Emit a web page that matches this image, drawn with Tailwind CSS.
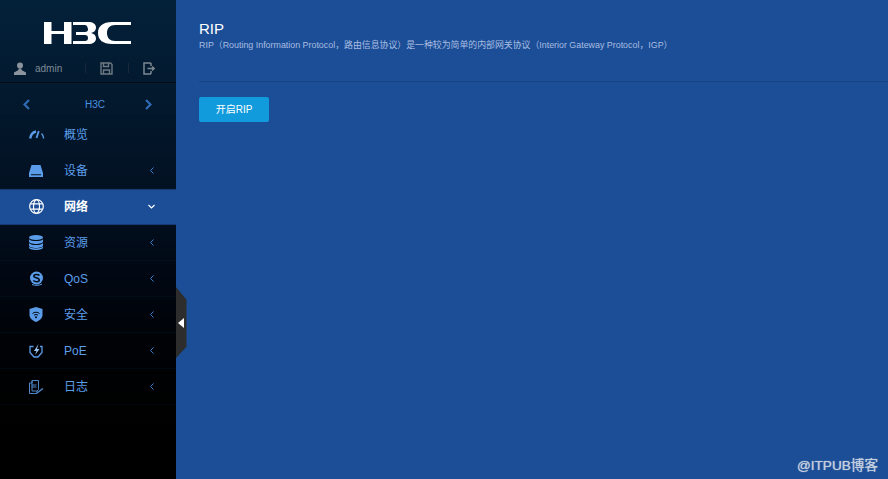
<!DOCTYPE html>
<html lang="zh-CN">
<head>
    <meta charset="UTF-8">
    <meta name="viewport" content="width=device-width, initial-scale=1.0">
    <script src="https://cdn.jsdelivr.net/npm/@tailwindcss/browser@4"></script>
    <title>RIP</title>
</head>
<body class="h-[479px] w-[888px] overflow-hidden bg-[#1b4e96] font-['Liberation_Sans','Noto_Sans_CJK_SC',sans-serif]">
<div class="relative flex h-[479px] w-[888px]">
    <!-- sidebar -->
    <aside class="flex h-full w-[176px] shrink-0 flex-col bg-gradient-to-b from-[#03213a] via-[#020f1f] via-45% to-black">
        <div class="flex h-[83px] flex-col border-b border-[#020c18]">
            <div class="flex justify-center pt-[22px]">
                <svg width="90" height="23" viewBox="0 0 90 23">
                    <path d="M1 0h7.500v9h12.500V0h7.500v22H21V12H8.500v10H1z" fill="#fff"/>
                    <path d="M30 0h15c5 0 8 2 8 5.500c0 3-2 5-5 5.500c3 .5 5 2.500 5 5.500c0 3.500-3 5.500-8 5.500H30v-3h12c2 0 3-1 3-3c0-2-1-3-3-3H33v-3h9c2 0 3-1 3-2.500S44 3 42 3H30z" fill="#fff"/>
                    <path d="M88 0H69C60 0 55 4 55 11s5 11 14 11h19v-3H72c-5 0-8-3-8-8s3-8 8-8h16z" fill="#fff"/>
                </svg>
            </div>
            <div class="mt-[13px] flex h-[20px] items-center text-[10px] text-[#7e8a96]">
                <svg width="12" height="13" viewBox="0 0 12 13" class="ml-[14px]" fill="#8b949c"><circle cx="6" cy="3.500" r="3"/><path d="M4.500 6.500h3v1.500L12 10.500V13H0v-2.500L4.500 8z"/></svg>
                <span class="ml-[9px] w-[50px]">admin</span>
                <span class="h-[10px] w-px bg-[#17293a]"></span>
                <svg width="13" height="13" viewBox="0 0 13 13" class="ml-[14px]" fill="none" stroke="#6f7982" stroke-width="1.400"><path d="M1 1h9.500L12 2.500V12H1z"/><path d="M3.500 1v3.500h5V1M3.500 12V8h6v4"/></svg>
                <span class="ml-[15px] h-[10px] w-px bg-[#17293a]"></span>
                <svg width="12" height="13" viewBox="0 0 12 13" class="ml-[14px]" fill="none" stroke="#7d8790" stroke-width="1.500"><path d="M8 1H1v11h7M8 4V1M8 12V9"/><path d="M4.500 6.500H11M9 4.500l2.200 2-2.200 2"/></svg>
            </div>
        </div>
        <div class="flex h-[34px] items-center border-b border-[#031424] pl-[23px] pt-[10px] text-[10px]">
            <svg width="7" height="11" viewBox="0 0 7 11" fill="none" stroke="#2f6cb5" stroke-width="2.200"><path d="M6 1L1.500 5.500 6 10"/></svg>
            <span class="ml-[55px] w-[60px] text-[#4a90e0]">H3C</span>
            <svg width="7" height="11" viewBox="0 0 7 11" fill="none" stroke="#2f6cb5" stroke-width="2.200"><path d="M1 1l4.500 4.500L1 10"/></svg>
        </div>
        <nav class="flex flex-col text-[12px] text-[#5b9eea]">
            <a class="flex h-[36px] items-center border-b border-[#031628] pl-[29px] pr-[22px]">
                <span class="flex w-[35px]"><svg width="16" height="9" viewBox="0 0 16 9" fill="none" stroke="#5b9ce8"><path d="M1.200 8.500C1.700 4.500 4 2.300 7 1.500" stroke-width="2.400"/><path d="M9.800 1L7.500 8" stroke-width="1.800"/><path d="M12.500 3.500c1.300 1 1.900 3 2.200 5" stroke-width="1.400"/></svg></span>
                <span>概览</span>
            </a>
            <a class="flex h-[36px] items-center border-b border-[#02142a] pl-[29px] pr-[22px]">
                <span class="flex w-[35px]"><svg width="14" height="12" viewBox="0 0 14 12" fill="#5b9ce8"><path d="M2.500 0h9L14 8H0z"/><path d="M0 8h14v4H0zM2 9.300v1h10v-1z" fill-rule="evenodd"/></svg></span>
                <span>设备</span>
                <svg width="4" height="7" viewBox="0 0 4 7" class="ml-auto" fill="none" stroke="#2f7fd0" stroke-width="1"><path d="M3.500.500L.5 3.500l3 3"/></svg>
            </a>
            <a class="flex h-[36px] items-center bg-[#1b4e96] pb-[1px] pl-[29px] pr-[22px] font-bold text-white shadow-[inset_0_1px_0_#143a70,inset_0_-1px_0_#143a70]">
                <span class="flex w-[35px]"><svg width="15" height="15" viewBox="0 0 15 15" fill="none" stroke="#fff" stroke-width="1.200"><circle cx="7.500" cy="7.500" r="6.800"/><ellipse cx="7.500" cy="7.500" rx="3" ry="6.800"/><path d="M1.500 4.800h12M1.500 10.200h12"/></svg></span>
                <span>网络</span>
                <svg width="7" height="5" viewBox="0 0 7 5" class="ml-auto -mr-[1px]" fill="none" stroke="#fff" stroke-width="1.200"><path d="M.5 1l3 3 3-3"/></svg>
            </a>
            <a class="flex h-[36px] items-center border-b border-[#020e1c] pl-[29px] pr-[22px]">
                <span class="flex w-[35px]"><svg width="14" height="15" viewBox="0 0 14 15" fill="#5b9ce8"><ellipse cx="7" cy="2.500" rx="7" ry="2.500"/><path d="M0 4.200C1.500 5.700 4 6 7 6s5.500-.3 7-1.800v2.300C14 8 11 9 7 9S0 8 0 6.500zM0 8.200C1.500 9.500 4 10 7 10s5.500-.5 7-1.800v2.300C14 12 11 13 7 13s-7-1-7-2.500z"/><path d="M0 11.800C1.500 13 4 13.500 7 13.500s5.500-.5 7-1.700v.7C14 14 11 15 7 15s-7-1-7-2.500z"/></svg></span>
                <span>资源</span>
                <svg width="4" height="7" viewBox="0 0 4 7" class="ml-auto" fill="none" stroke="#2f7fd0" stroke-width="1"><path d="M3.500.500L.5 3.500l3 3"/></svg>
            </a>
            <a class="flex h-[36px] items-center border-b border-[#020c18] pl-[29px] pr-[22px]">
                <span class="flex w-[35px]"><svg width="15" height="15" viewBox="0 0 15 15"><circle cx="7.500" cy="7" r="6.500" fill="#5b9ce8"/><path d="M10.500 4.500C9 3 5 3 4.700 5c-.2 2 5.600 1.500 5.600 4 0 2-4 2.300-6 .5" fill="none" stroke="#020a16" stroke-width="1.500"/><path d="M3 13.500c3 1.200 7 1.200 10-.5" fill="none" stroke="#5b9ce8" stroke-width="1"/></svg></span>
                <span>QoS</span>
                <svg width="4" height="7" viewBox="0 0 4 7" class="ml-auto" fill="none" stroke="#2f7fd0" stroke-width="1"><path d="M3.500.500L.5 3.500l3 3"/></svg>
            </a>
            <a class="flex h-[36px] items-center border-b border-[#020a14] pl-[29px] pr-[22px]">
                <span class="flex w-[35px]"><svg width="14" height="15" viewBox="0 0 14 15" fill="none"><path d="M7 0l6.500 2v6c0 3.500-3 5.500-6.500 7C3.500 13.500.5 11.500.5 8V2z" fill="#5b9ce8"/><path d="M3.500 6.500c2-1.700 5-1.700 7 0M5 8.300c1.200-1 2.800-1 4 0" stroke="#020a16" stroke-width="1"/><circle cx="7" cy="10.200" r="1" fill="#020a16"/></svg></span>
                <span>安全</span>
                <svg width="4" height="7" viewBox="0 0 4 7" class="ml-auto" fill="none" stroke="#2f7fd0" stroke-width="1"><path d="M3.500.500L.5 3.500l3 3"/></svg>
            </a>
            <a class="flex h-[36px] items-center border-b border-[#020810] pl-[29px] pr-[22px]">
                <span class="flex w-[35px]"><svg width="14" height="14" viewBox="0 0 14 14" fill="none"><path d="M4.500 2.500H1v6L5 13h4l4-4.500v-6h-2" stroke="#5b9ce8" stroke-width="1.300"/><path d="M9.500 0L5 7h2.500L6 11l4.500-6H8z" fill="#9cc4f2"/></svg></span>
                <span>PoE</span>
                <svg width="4" height="7" viewBox="0 0 4 7" class="ml-auto" fill="none" stroke="#2f7fd0" stroke-width="1"><path d="M3.500.500L.5 3.500l3 3"/></svg>
            </a>
            <a class="flex h-[36px] items-center border-b border-[#01060c] pl-[29px] pr-[22px]">
                <span class="flex w-[35px]"><svg width="15" height="14" viewBox="0 0 15 14" fill="none" stroke="#4f86c9" stroke-width="1"><path d="M3 .5h6.500v9L8 11v2.500H.5V3H3z"/><path d="M3 .5V11h5M2.500 5h5M2.500 7h5" /><path d="M8 13l6-4.500" stroke-width="1.500"/></svg></span>
                <span>日志</span>
                <svg width="4" height="7" viewBox="0 0 4 7" class="ml-auto" fill="none" stroke="#2f7fd0" stroke-width="1"><path d="M3.500.500L.5 3.500l3 3"/></svg>
            </a>
        </nav>
    </aside>

    <!-- collapse handle -->
    <div class="absolute left-[176px] top-[287px] flex h-[71px] w-[10.500px] items-center justify-center bg-[#2c2d2c] [clip-path:polygon(0_0,100%_18%,100%_84%,0_100%)]">
        <span class="h-0 w-0 border-y-[5px] border-r-[6px] border-y-transparent border-r-white"></span>
    </div>

    <!-- content -->
    <main class="min-w-0 flex-1 pl-[23px]">
        <div class="h-[82px] border-b border-[#174281] pt-[20px]">
            <h1 class="text-[15px] leading-[18px] text-white">RIP</h1>
            <p class="mt-[1px] text-[8.900px] leading-[12px] whitespace-nowrap text-[#a9bde2]">RIP（Routing Information Protocol，路由信息协议）是一种较为简单的内部网关协议（Interior Gateway Protocol，IGP）</p>
        </div>
        <button class="mt-[15px] h-[25px] w-[70px] rounded-[2px] bg-[#129bdc] text-[10px] text-white">开启RIP</button>
    </main>

    <span class="absolute right-[10px] top-[456px] text-[13.600px] text-[#c3cfe0] [text-shadow:0_0_1px_#c3cfe0]">@ITPUB博客</span>
</div>
</body>
</html>
